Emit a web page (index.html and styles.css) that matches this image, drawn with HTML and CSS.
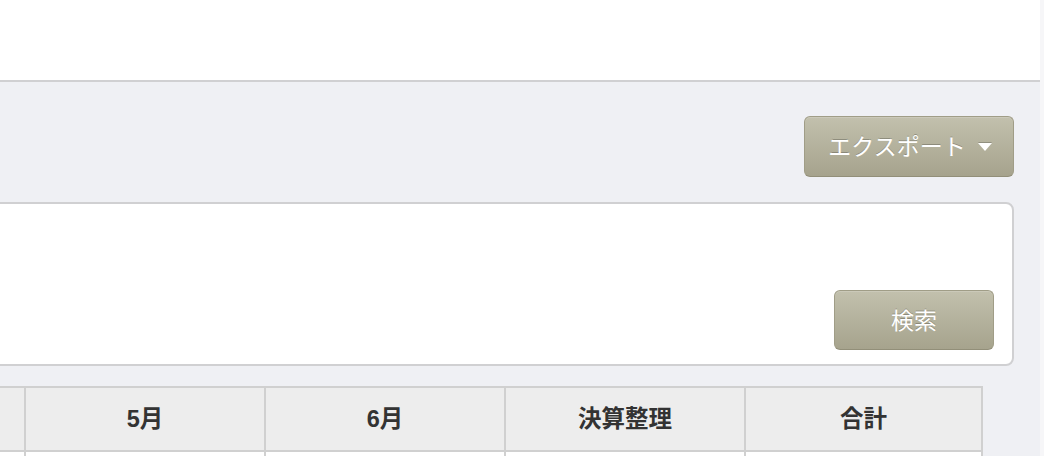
FILE: index.html
```html
<!DOCTYPE html>
<html lang="ja">

<head>
    <meta charset="UTF-8">
    <meta name="viewport" content="width=device-width, initial-scale=1.0">
    <title>月次推移表</title>
    <link rel="stylesheet" href="styles.css">
</head>

<body>
    <div class="page">
        <header class="topbar"></header>

        <main class="main">
            <div class="toolbar">
                <button class="btn btn-export">エクスポート <span class="caret"></span></button>
            </div>

            <!-- Search panel -->
            <div class="search-panel">
                <button class="btn btn-search">検索</button>
            </div>

            <div class="table-wrap">
                <table class="report">
                    <colgroup>
                        <col class="col-head">
                        <col class="col-month">
                        <col class="col-month">
                        <col class="col-month">
                        <col class="col-month">
                        <col>
                    </colgroup>
                    <thead>
                        <tr>
                            <th></th>
                            <th></th>
                            <th>5月</th>
                            <th>6月</th>
                            <th>決算整理</th>
                            <th>合計</th>
                        </tr>
                    </thead>
                    <tbody>
                        <tr>
                            <td></td>
                            <td></td>
                            <td></td>
                            <td></td>
                            <td></td>
                            <td></td>
                        </tr>
                    </tbody>
                </table>
            </div>
        </main>
    </div>
</body>

</html>
```

FILE: styles.css
```css
/* Reset some default styles */
* {
    margin: 0;
    padding: 0;
    box-sizing: border-box;
}

html,
body {
    height: 100%;
    overflow: hidden;
}

body {
    background-color: #f6f6f8;
    font-family: "Liberation Sans", "Noto Sans CJK JP", sans-serif;
    color: #333;
}

.page {
    width: 1040px;
    height: 100%;
    background-color: #eff0f4;
}

.topbar {
    height: 82px;
    background-color: #fff;
    border-bottom: 2px solid #d0d0d2;
}

.main {
    margin-left: -256px;
    padding: 34px 26px 0 0;
}

.toolbar {
    display: flex;
    justify-content: flex-end;
    margin-bottom: 25px;
}

.btn {
    display: inline-flex;
    align-items: center;
    justify-content: center;
    height: 61px;
    font-family: "Noto Sans CJK JP", sans-serif;
    font-size: 23px;
    line-height: 1;
    color: #fff;
    text-shadow: 0 -1px 0 rgba(0, 0, 0, 0.22);
    background-image: linear-gradient(to bottom, #c2c0ad, #a6a38d);
    border: 1px solid #a09d87;
    border-bottom-color: #928f79;
    border-radius: 6px;
    box-shadow: inset 0 1px 0 rgba(255, 255, 255, 0.15);
    cursor: pointer;
}

.btn-export {
    width: 210px;
    gap: 12px;
    padding: 0 0 2px 2px;
}

.caret {
    width: 0;
    height: 0;
    border-left: 7px solid transparent;
    border-right: 7px solid transparent;
    border-top: 8px solid #fff;
    filter: drop-shadow(0 -1px 0 rgba(0, 0, 0, 0.2));
    margin-top: 3px;
}

.search-panel {
    display: flex;
    justify-content: flex-end;
    align-items: flex-end;
    height: 164px;
    padding: 0 18px 14px 0;
    background-color: #fff;
    border: 2px solid #d0d0d2;
    border-radius: 8px;
    margin-bottom: 20px;
}

.btn-search {
    width: 160px;
    height: 60px;
    padding-bottom: 2px;
}

.table-wrap {
    padding-right: 30px;
}

.report {
    width: 1239px;
    table-layout: fixed;
    border-collapse: collapse;
}

.col-head {
    width: 40px;
}

.col-month {
    width: 240px;
}

.report th,
.report td {
    border: 2px solid #d0d0d0;
    text-align: center;
}

.report th {
    height: 64px;
    padding-top: 1px;
    font-size: 23.5px;
    line-height: 1;
    font-weight: bold;
    color: #333;
    background-color: #ededed;
}

.report td {
    height: 60px;
    background-color: #fff;
}
```
